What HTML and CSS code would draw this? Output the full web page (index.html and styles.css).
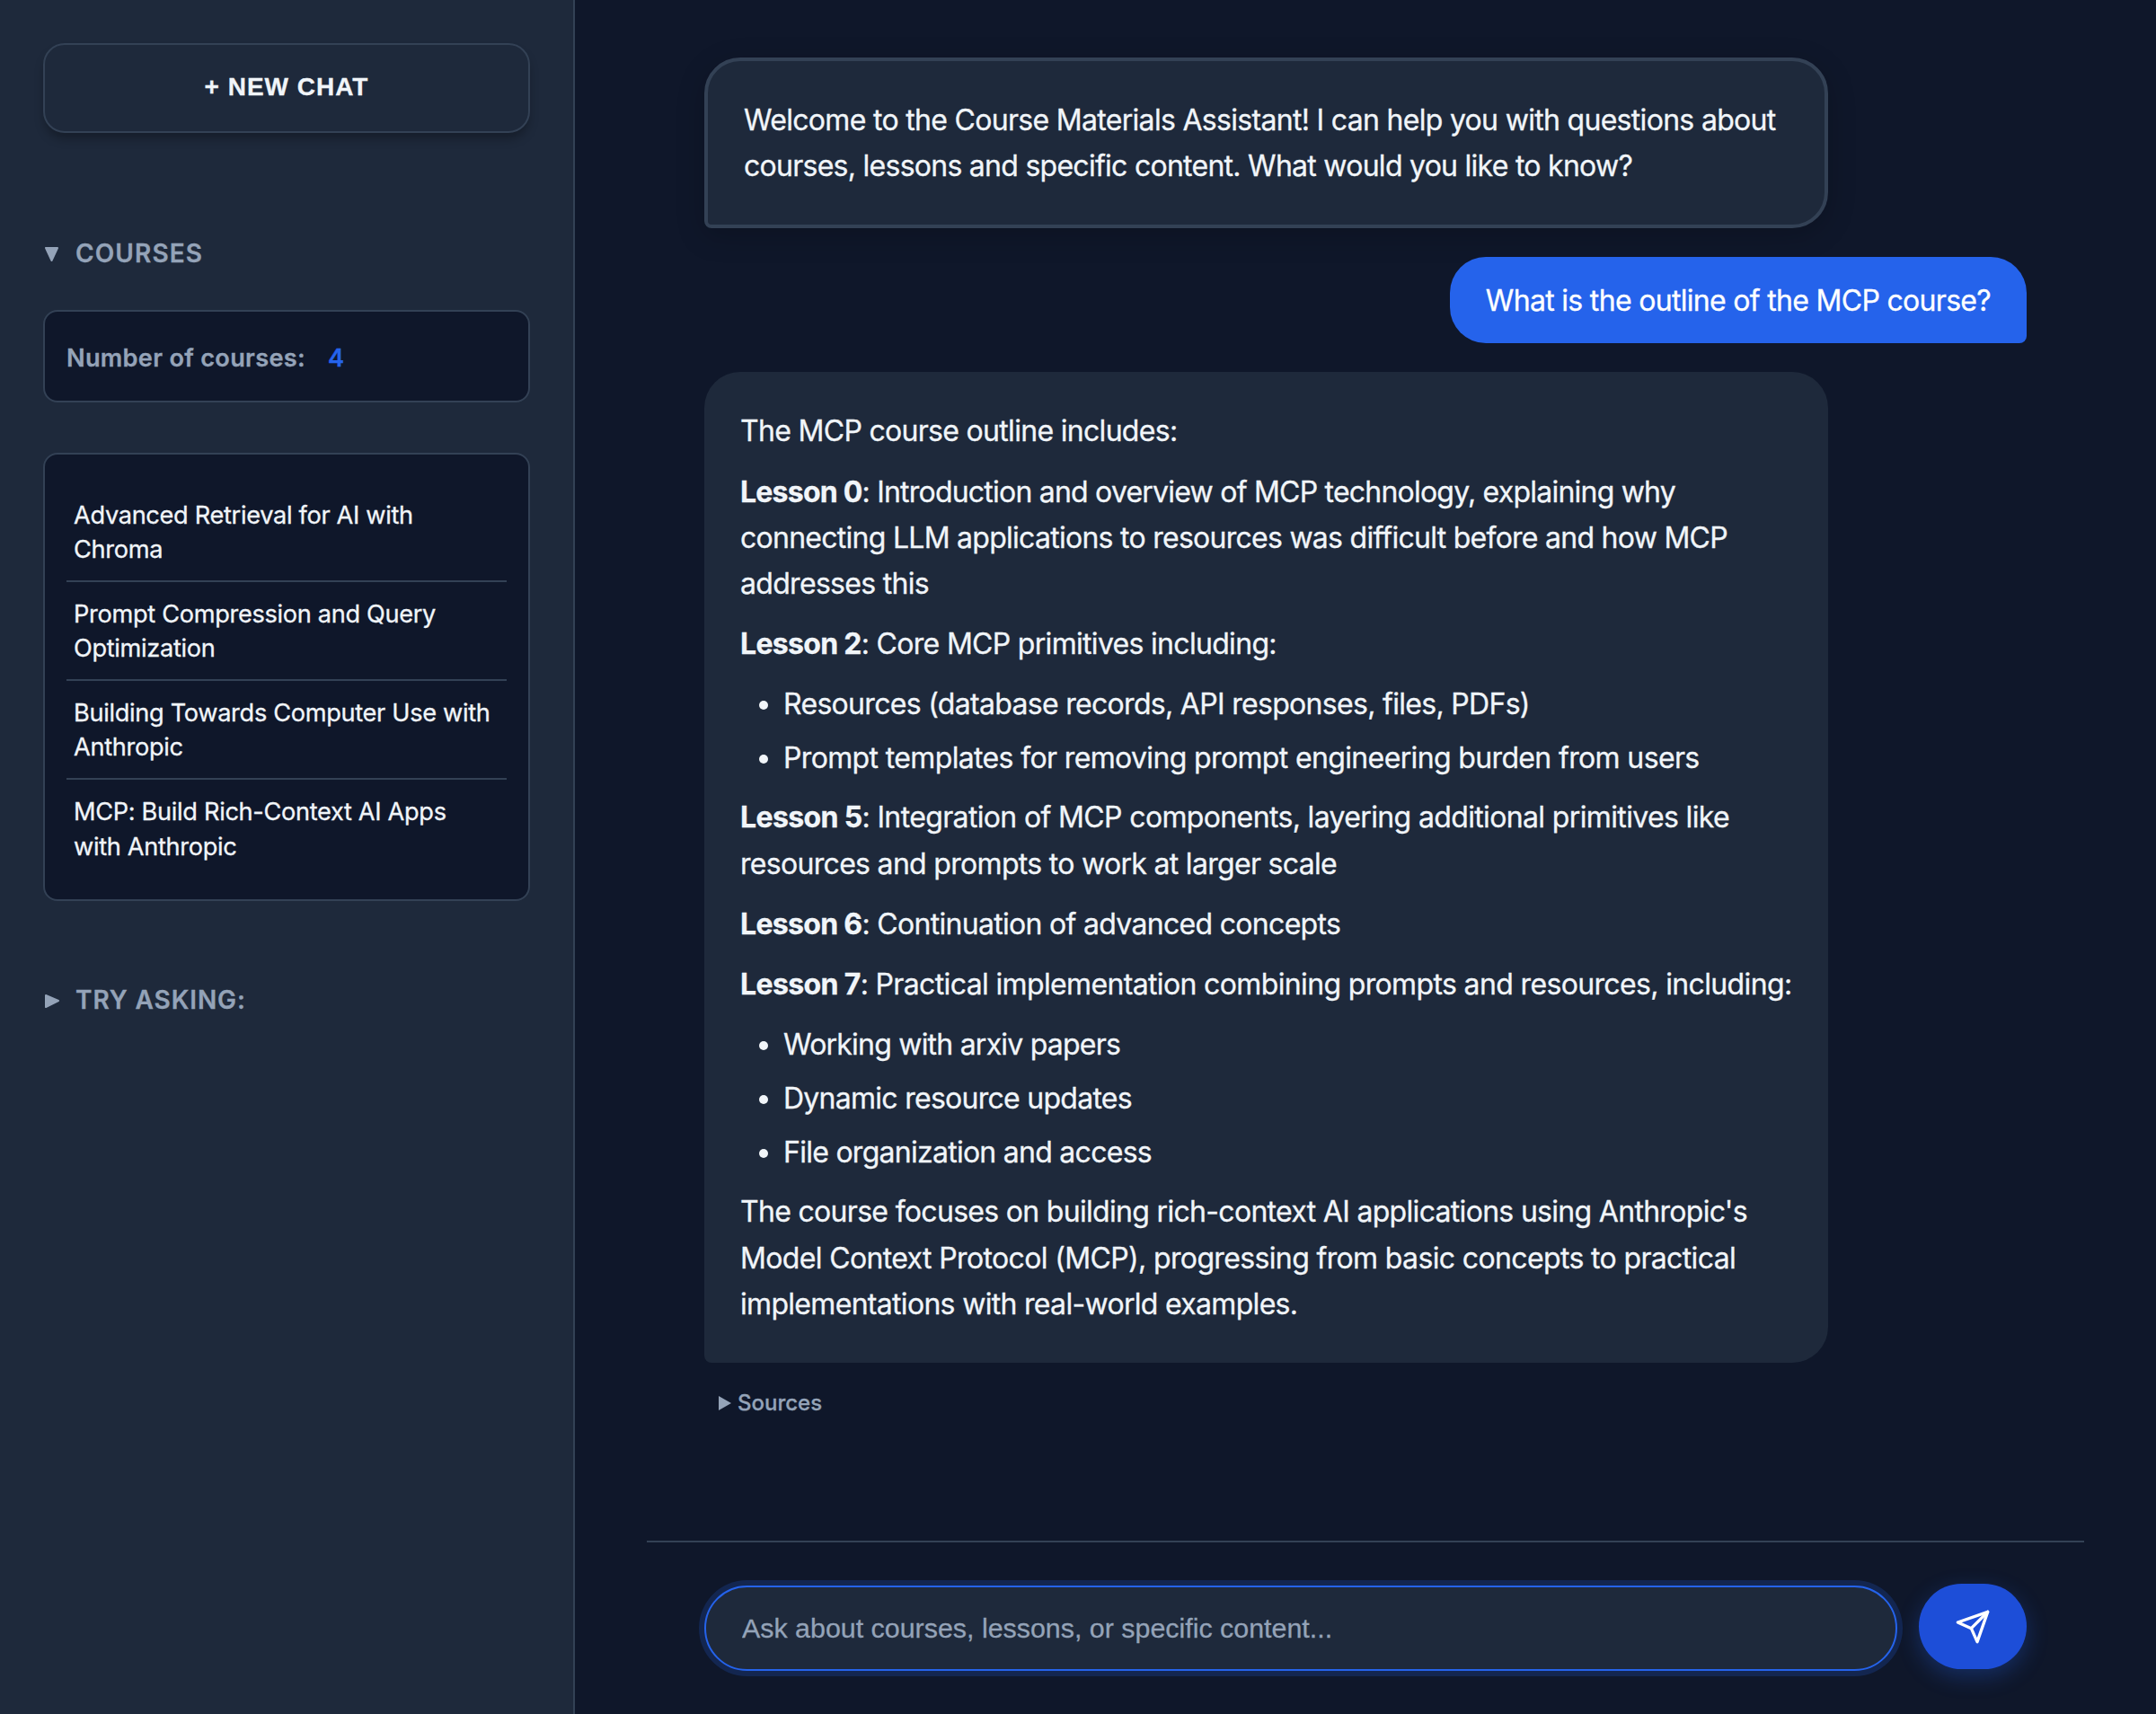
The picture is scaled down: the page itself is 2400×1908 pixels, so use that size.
FILE: index.html
```html
<!DOCTYPE html>
<html lang="en">
<head>
<meta charset="utf-8">
<title>Course Materials Assistant</title>
<link rel="stylesheet" href="styles.css">
</head>
<body>
<div class="app">
  <aside class="sidebar">
    <button class="new-chat">+ NEW CHAT</button>
    <section class="courses">
      <h2 class="section-title"><svg class="caret" viewBox="0 0 18 18"><path d="M3 2H16L9.500 16Z"/></svg>COURSES</h2>
      <div class="stat"><span>Number of courses:</span><span class="stat-value">4</span></div>
      <ul class="course-list">
        <li>Advanced Retrieval for AI with<br>Chroma</li>
        <li>Prompt Compression and Query<br>Optimization</li>
        <li>Building Towards Computer Use with<br>Anthropic</li>
        <li>MCP: Build Rich-Context AI Apps<br>with Anthropic</li>
      </ul>
    </section>
    <h2 class="section-title prompts-title"><svg class="caret" viewBox="0 0 18 18"><path d="M3 3L17 9L3 16Z"/></svg>TRY ASKING:</h2>
  </aside>
  <main class="chat">
    <div class="messages">
      <div class="bubble assistant welcome">
        <p>Welcome to the Course Materials Assistant! I can help you with questions about<br><span class="snug">courses, lessons and specific content. What would you like to know?</span></p>
      </div>
      <div class="bubble user">What is the outline of the MCP course?</div>
      <div class="bubble assistant">
        <p>The MCP course outline includes:</p>
        <p><span class="tight"><strong>Lesson 0</strong>: Introduction and overview of MCP technology, explaining why</span><br><span class="snug">connecting LLM applications to resources was difficult before and how MCP</span><br>addresses this</p>
        <p><strong>Lesson 2</strong>: Core MCP primitives including:</p>
        <ul>
          <li>Resources (database records, API responses, files, PDFs)</li>
          <li><span class="loose">Prompt templates for removing prompt engineering burden from users</span></li>
        </ul>
        <p><span class="loose"><strong>Lesson 5</strong>: Integration of MCP components, layering additional primitives like</span><br>resources and prompts to work at larger scale</p>
        <p><strong>Lesson 6</strong>: Continuation of advanced concepts</p>
        <p class="loose"><strong>Lesson 7</strong>: Practical implementation combining prompts and resources, including:</p>
        <ul>
          <li class="tight">Working with arxiv papers</li>
          <li class="snug">Dynamic resource updates</li>
          <li class="snug">File organization and access</li>
        </ul>
        <p>The course focuses on building rich-context AI applications using Anthropic's<br><span class="loose">Model Context Protocol (MCP), progressing from basic concepts to practical</span><br>implementations with real-world examples.</p>
      </div>
      <div class="sources"><svg class="sources-caret" viewBox="0 0 14 16"><path d="M0 0L14 8L0 16Z"/></svg>Sources</div>
    </div>
    <form class="composer">
      <input class="field" type="text" placeholder="Ask about courses, lessons, or specific content...">
      <button class="send" type="button" aria-label="Send"><svg viewBox="0 0 24 24" fill="none" stroke="currentColor" stroke-width="2" stroke-linecap="round" stroke-linejoin="round"><path d="M22 2L11 13"/><path d="M22 2L15 22L11 13L2 9Z"/></svg></button>
    </form>
  </main>
</div>
</body>
</html>
```
FILE: styles.css
```css
* { box-sizing: border-box; margin: 0; padding: 0; }

:root {
  --bg: #0f172a;
  --surface: #1e293b;
  --border: #334155;
  --text: #f1f5f9;
  --muted: #94a3b8;
  --primary: #2563eb;
}

body {
  background: var(--bg);
  color: var(--text);
  font-family: Inter, "Liberation Sans", sans-serif;
  font-size: 32px;
  line-height: 1.6;
  white-space: nowrap;
  -webkit-text-stroke: 0.3px currentColor;
}

.app { display: flex; height: 1908px; overflow: hidden; }

.sidebar {
  width: 640px;
  flex: none;
  padding: 48px;
  background: var(--surface);
  border-right: 2px solid var(--border);
}

.new-chat {
  display: block;
  width: 100%;
  height: 100px;
  padding-bottom: 2px;
  border: 2px solid var(--border);
  border-radius: 24px;
  background: var(--surface);
  color: var(--text);
  font: bold 28px "Liberation Sans", Arial, sans-serif;
  letter-spacing: 1px;
  box-shadow: 0 8px 12px -2px rgba(0, 0, 0, 0.3);
}

.section-title {
  display: flex;
  align-items: center;
  gap: 18px;
  height: 44px;
  padding-top: 1px;
  color: var(--muted);
  font-size: 28px;
  font-weight: 600;
  letter-spacing: 1.1px;
}

.prompts-title { padding-top: 2px; letter-spacing: 0.9px; }

.caret {
  width: 18px;
  height: 18px;
  fill: var(--muted);
  stroke: var(--muted);
  stroke-width: 2;
  stroke-linejoin: round;
}

.courses { padding: 112px 0 88px; }

.stat {
  display: flex;
  align-items: center;
  gap: 25px;
  height: 103px;
  margin-top: 41px;
  padding: 4px 24px 0;
  border: 2px solid var(--border);
  border-radius: 16px;
  background: var(--bg);
  color: var(--muted);
  font-size: 27.2px;
  font-weight: 600;
  letter-spacing: 0.28px;
}

.stat-value { color: var(--primary); }

.course-list {
  margin-top: 56px;
  padding: 32px 24px;
  border: 2px solid var(--border);
  border-radius: 16px;
  background: var(--bg);
  font-size: 27.2px;
  letter-spacing: -0.33px;
  line-height: 1.4;
  list-style: none;
}

.course-list li { padding: 17px 8px 15px; border-bottom: 2px solid var(--border); }
.course-list li:last-child { padding-bottom: 7px; border-bottom: 0; }

.chat {
  display: flex;
  flex-direction: column;
  width: 1600px;
  margin: 0 auto;
}

.messages {
  display: flex;
  flex: 1;
  flex-direction: column;
  align-items: flex-start;
  gap: 32px;
  padding: 64px 64px 0;
}

.bubble { border-radius: 40px; letter-spacing: -0.69px; }
.loose { letter-spacing: -0.64px; }
.snug { letter-spacing: -0.73px; }
.tight { letter-spacing: -0.78px; }

.assistant {
  width: 1251px;
  padding: 40px;
  background: var(--surface);
  border-bottom-left-radius: 8px;
}

.welcome {
  border: 4px solid var(--border);
  box-shadow: 0 8px 32px rgba(0, 0, 0, 0.2);
}

.user {
  align-self: flex-end;
  padding: 22.4px 40px;
  background: var(--primary);
  color: #fff;
  border-bottom-right-radius: 8px;
}

.assistant p + p, .assistant ul { margin-top: 16px; }
.assistant ul + p { margin-top: 15px; }
.assistant ul { padding-left: 48px; }
.assistant li + li { margin-top: 8.8px; }

.sources {
  display: flex;
  align-items: center;
  gap: 7px;
  height: 40px;
  margin-top: -7px;
  padding-left: 16px;
  color: var(--muted);
  font-size: 24px;
  font-weight: 500;
}

.sources-caret { width: 14px; height: 16px; fill: var(--muted); }

.composer {
  display: flex;
  gap: 24px;
  height: 193px;
  padding: 48px 64px;
  border-top: 2px solid var(--border);
}

.field {
  flex: 1;
  height: 95px;
  padding: 0 40px;
  border: 2px solid var(--primary);
  border-radius: 48px;
  outline: none;
  background: var(--surface);
  color: var(--text);
  font: 30.4px "Liberation Sans", Arial, sans-serif;
  box-shadow: 0 0 0 6px rgba(37, 99, 235, 0.2);
}

.field::placeholder { color: var(--muted); }

.send {
  display: flex;
  align-items: center;
  justify-content: center;
  width: 120px;
  height: 95px;
  border: 0;
  border-radius: 48px;
  background: #1d4ed8;
  color: #fff;
  transform: translateY(-2px);
  box-shadow: 0 8px 24px rgba(37, 99, 235, 0.3);
}

.send svg { width: 40px; height: 40px; }
```
